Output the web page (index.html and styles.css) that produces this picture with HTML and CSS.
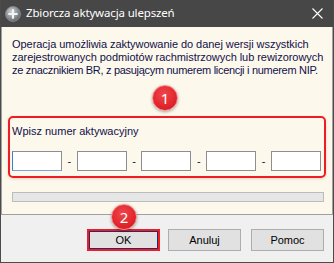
FILE: index.html
```html
<!DOCTYPE html>
<html lang="pl">
<head>
<meta charset="utf-8">
<title>Zbiorcza aktywacja ulepszeń</title>
<link rel="stylesheet" href="styles.css">
</head>
<body>
<div class="window">
  <div class="titlebar">
    <svg class="app-icon" width="16" height="16" viewBox="0 0 16 16">
      <defs>
        <radialGradient id="g" cx="40%" cy="35%" r="70%">
          <stop offset="0" stop-color="#cfd3d6"/>
          <stop offset="1" stop-color="#5d6368"/>
        </radialGradient>
      </defs>
      <circle cx="8" cy="8" r="7.5" fill="url(#g)" stroke="#8c8c8c" stroke-width="0.8"/>
      <path d="M8 4.2v7.6M4.2 8h7.6" stroke="#f4f4f4" stroke-width="2.2" stroke-linecap="round"/>
    </svg>
    <span class="title">Zbiorcza aktywacja ulepszeń</span>
    <svg class="close" width="11" height="11" viewBox="0 0 11 11">
      <path d="M0.5 0.5L10.5 10.5M10.5 0.5L0.5 10.5" stroke="#ffffff" stroke-width="1.1"/>
    </svg>
  </div>
  <div class="panel">
    <p class="desc">Operacja umożliwia zaktywowanie do danej wersji wszystkich<br>zarejestrowanych podmiotów rachmistrzowych lub rewizorowych<br><span class="tight">ze znacznikiem BR, z pasującym numerem licencji i numerem NIP.</span></p>
    <div class="group">
      <span class="badge badge-1">1</span>
      <div class="label">Wpisz numer aktywacyjny</div>
      <div class="fields">
        <span class="field focused"></span><span class="dash">-</span>
        <span class="field"></span><span class="dash">-</span>
        <span class="field"></span><span class="dash">-</span>
        <span class="field"></span><span class="dash">-</span>
        <span class="field"></span>
      </div>
    </div>
    <div class="progress"></div>
  </div>
  <div class="footer">
    <div class="btn-wrap">
      <span class="badge badge-2">2</span>
      <button class="btn btn-ok">OK</button>
    </div>
    <button class="btn">Anuluj</button>
    <button class="btn btn-help">Pomoc</button>
  </div>
</div>
</body>
</html>
```
FILE: styles.css
```css
html, body {
  margin: 0;
  padding: 0;
  background: #ffffff;
}
.window {
  width: 332px;
  height: 262px;
  border: 1px solid #4b4b4b;
  border-top: none;
  display: flex;
  flex-direction: column;
  font-family: "Liberation Sans", Arial, sans-serif;
}
.titlebar {
  height: 27px;
  flex: none;
  background: #474747;
  display: flex;
  align-items: center;
  position: relative;
}
.app-icon {
  margin-left: 4px;
}
.title {
  margin-left: 5px;
  color: #ffffff;
  font-family: "Noto Sans", sans-serif;
  font-size: 11.5px;
  letter-spacing: -0.15px;
  position: relative;
  top: -1px;
}
.close {
  margin-left: auto;
  margin-right: 10px;
  margin-top: -1px;
}
.panel {
  flex: none;
  background: #fdf8ec;
  border: 1px solid #a0a0a0;
  border-top: none;
  padding: 11px 6px 12px 6px;
  height: 188px;
  box-sizing: border-box;
}
.desc {
  margin: 0 0 39px 4px;
  font-size: 11px;
  line-height: 13px;
  color: #10104a;
  white-space: nowrap;
  letter-spacing: -0.05px;
}
.tight {
  letter-spacing: -0.3px;
}
.group {
  position: relative;
  border: 2px solid #ee1c25;
  border-radius: 5px;
  padding: 7px 3px 6px 2px;
  height: 62px;
  box-sizing: border-box;
  box-shadow: 0 1px 3px rgba(120, 60, 0, 0.18);
}
.label {
  font-size: 11px;
  line-height: 13px;
  color: #10104a;
  margin-bottom: 13px;
}
.fields {
  display: flex;
  align-items: center;
  justify-content: space-between;
  width: 309px;
}
.field {
  width: 50px;
  height: 20px;
  box-sizing: border-box;
  background: #ffffff;
  border: 1px solid #8e8e8e;
}
.field.focused {
  border-left-color: #3c7fd0;
  border-bottom-color: #7aa4d8;
}
.dash {
  font-size: 11px;
  color: #10104a;
}
.progress {
  margin: 14px 2px 0 4px;
  height: 10px;
  box-sizing: border-box;
  border: 1px solid #bcbcbc;
  background: #e6e6e6;
}
.footer {
  flex: 1;
  background: #f0f0f0;
  display: flex;
  justify-content: flex-end;
  align-items: flex-start;
  gap: 8px;
  padding: 14px 9px 0 0;
}
.btn-wrap {
  position: relative;
}
.btn {
  width: 73px;
  height: 22px;
  box-sizing: border-box;
  background: #e1e1e1;
  border: 1px solid #adadad;
  font-family: "Liberation Sans", Arial, sans-serif;
  font-size: 11px;
  color: #000000;
  padding: 0;
  margin: 0;
}
.btn-help {
  margin-left: 2px;
}
.btn-ok {
  border: 2px solid #ee1c25;
  box-shadow: inset 0 0 0 1px #2a2a6a;
  display: block;
}
.badge {
  position: absolute;
  z-index: 2;
  width: 26px;
  height: 26px;
  border-radius: 50%;
  background: radial-gradient(circle at 45% 35%, #f0474c 0%, #e0262c 60%, #c81a20 100%);
  border: 1px solid #f58a8d;
  box-sizing: border-box;
  color: #ffffff;
  font-family: "Noto Sans", sans-serif;
  font-size: 15px;
  line-height: 24px;
  text-align: center;
  box-shadow: 0 1px 3px rgba(0, 0, 0, 0.35);
}
.badge-1 {
  left: 142px;
  top: -33px;
}
.badge-2 {
  left: 24px;
  top: -25px;
}
```
